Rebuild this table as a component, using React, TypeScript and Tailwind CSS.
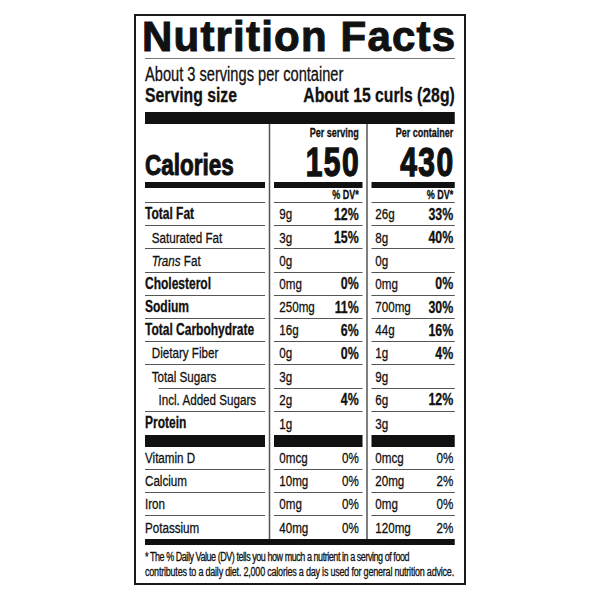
import type { ReactNode } from 'react';
import clsx from 'clsx';

const GRID = 'grid grid-cols-[160px_12px_118px_12px_111px]';
const RULE = 'border-b border-[#555]';

interface Nutrient {
  label: ReactNode;
  bold?: boolean;
  indent?: string;
  ruleIndent?: boolean;
  serv: string;
  servDv?: string;
  cont: string;
  contDv?: string;
  noRule?: boolean;
}

const NUTRIENTS: Nutrient[] = [
  { label: 'Total Fat', bold: true, serv: '9g', servDv: '12%', cont: '26g', contDv: '33%' },
  { label: 'Saturated Fat', indent: 'pl-[9px]', serv: '3g', servDv: '15%', cont: '8g', contDv: '40%' },
  { label: <><i>Trans</i> Fat</>, indent: 'pl-[9px]', serv: '0g', cont: '0g' },
  { label: 'Cholesterol', bold: true, serv: '0mg', servDv: '0%', cont: '0mg', contDv: '0%' },
  { label: 'Sodium', bold: true, serv: '250mg', servDv: '11%', cont: '700mg', contDv: '30%' },
  { label: 'Total Carbohydrate', bold: true, serv: '16g', servDv: '6%', cont: '44g', contDv: '16%' },
  { label: 'Dietary Fiber', indent: 'pl-[9px]', serv: '0g', servDv: '0%', cont: '1g', contDv: '4%' },
  { label: 'Total Sugars', indent: 'pl-[9px]', ruleIndent: true, serv: '3g', cont: '9g' },
  { label: 'Incl. Added Sugars', indent: 'pl-[18px]', serv: '2g', servDv: '4%', cont: '6g', contDv: '12%' },
  { label: 'Protein', bold: true, serv: '1g', cont: '3g', noRule: true },
];

const MINERALS = [
  { label: 'Vitamin D', serv: '0mcg', servDv: '0%', cont: '0mcg', contDv: '0%' },
  { label: 'Calcium', serv: '10mg', servDv: '0%', cont: '20mg', contDv: '2%' },
  { label: 'Iron', serv: '0mg', servDv: '0%', cont: '0mg', contDv: '0%' },
  { label: 'Potassium', serv: '40mg', servDv: '0%', cont: '120mg', contDv: '2%' },
];

function Sep() {
  return (
    <div className="flex justify-center">
      <div className="w-[2px] bg-[#555]" />
    </div>
  );
}

function Bar({ h }: { h: string }) {
  return (
    <div className={clsx(GRID, h)}>
      <div className="bg-[#111]" />
      <Sep />
      <div className="bg-[#111]" />
      <Sep />
      <div className="bg-[#111]" />
    </div>
  );
}

function Amount({ amt, dv, pad, boldDv, rule }: { amt: string; dv?: string; pad: string; boldDv?: boolean; rule: boolean }) {
  return (
    <div className={clsx('flex items-center justify-between', pad, rule && RULE)}>
      <span className="text-[15.5px] leading-none">{amt}</span>
      {dv && <span className={clsx('leading-none', boldDv ? 'text-[16.5px] font-bold' : 'text-[15.5px]')}>{dv}</span>}
    </div>
  );
}

function BigCount({ head, value, pad }: { head: string; value: string; pad: string }) {
  return (
    <div className={clsx('flex flex-col items-end pt-[3px]', pad)}>
      <span className="text-[12px] leading-[12px] font-bold">{head}</span>
      <span className="mt-auto mr-[-2px] text-[40px] leading-[40px] font-bold tracking-[2px] [-webkit-text-stroke:1.4px_#111]">
        {value}
      </span>
    </div>
  );
}

export default function App() {
  return (
    <div className="flex h-[600px] w-[600px] justify-center bg-white pt-[14px] font-['Liberation_Sans',Arial,sans-serif] text-[#111]">
      <div className="h-[571px] w-[332px] border-2 border-[#1a1a1a] px-[9px]">
        <h1 className="ml-[-3px] h-[42px] whitespace-nowrap text-[42px] leading-[42px] font-bold tracking-[1.2px] [-webkit-text-stroke:1px_#111]">
          Nutrition Facts
        </h1>
        <div className="h-px bg-[#777]" />

        {/* condensed type: the rest is laid out wide and squeezed */}
        <div className="w-[413px] origin-left scale-x-75 [-webkit-text-stroke:0.3px_#111]">
          <div className="mt-[3px] h-[24px] text-[19.5px] leading-[24px]">About 3 servings per container</div>
          <div className="flex h-[18px] items-center justify-between text-[21px] leading-[18px] font-bold">
            <span>Serving size</span>
            <span>About 15 curls (28g)</span>
          </div>
          <div className="mt-[8px] h-[12px] bg-[#111]" />

          <div className={clsx(GRID, 'h-[58px]')}>
            <div className="flex items-end pb-[2px]">
              <span className="text-[30px] leading-[30px] font-bold [-webkit-text-stroke:1px_#111]">Calories</span>
            </div>
            <Sep />
            <BigCount head="Per serving" value="150" pad="pr-[5px]" />
            <Sep />
            <BigCount head="Per container" value="430" pad="pr-[2px]" />
          </div>
          <Bar h="h-[6px]" />

          <div className={clsx(GRID, 'h-[15px]')}>
            <div className={RULE} />
            <Sep />
            <div className={clsx('flex items-center justify-end pr-[5px]', RULE)}>
              <span className="text-[12px] leading-[12px] font-bold">% DV*</span>
            </div>
            <Sep />
            <div className={clsx('flex items-center justify-end pr-[2px]', RULE)}>
              <span className="text-[12px] leading-[12px] font-bold">% DV*</span>
            </div>
          </div>

          {NUTRIENTS.map((n, i) => (
            <div key={i} className={clsx(GRID, 'h-[23.2px]')}>
              <div className={clsx('flex items-center', n.ruleIndent && 'pl-[18px]')}>
                <div className={clsx('flex h-full flex-1 items-center', !n.noRule && RULE, n.ruleIndent ? '' : n.indent)}>
                  <span className={clsx('leading-none', n.bold ? 'text-[16px] font-bold' : 'text-[15.5px]', n.ruleIndent && 'ml-[-9px]')}>
                    {n.label}
                  </span>
                </div>
              </div>
              <Sep />
              <Amount amt={n.serv} dv={n.servDv} pad="pl-[7px] pr-[5px]" boldDv rule={!n.noRule} />
              <Sep />
              <Amount amt={n.cont} dv={n.contDv} pad="pl-[5px] pr-[2px]" boldDv rule={!n.noRule} />
            </div>
          ))}
          <Bar h="h-[12px]" />

          {MINERALS.map((m, i) => {
            const rule = i < MINERALS.length - 1;
            return (
              <div key={m.label} className={clsx(GRID, 'h-[23px]')}>
                <div className={clsx('flex items-center', rule && RULE)}>
                  <span className="text-[15.5px] leading-none">{m.label}</span>
                </div>
                <Sep />
                <Amount amt={m.serv} dv={m.servDv} pad="pl-[7px] pr-[5px]" rule={rule} />
                <Sep />
                <Amount amt={m.cont} dv={m.contDv} pad="pl-[5px] pr-[2px]" rule={rule} />
              </div>
            );
          })}
          <div className="h-[6px] bg-[#111]" />

          <div className="whitespace-nowrap pt-[5px] text-[12px] leading-[15px]">
            <span className="block tracking-[-0.6px]">* The % Daily Value (DV) tells you how much a nutrient in a serving of food</span>
            <span className="block tracking-[-0.28px]">contributes to a daily diet. 2,000 calories a day is used for general nutrition advice.</span>
          </div>
        </div>
      </div>
    </div>
  );
}
